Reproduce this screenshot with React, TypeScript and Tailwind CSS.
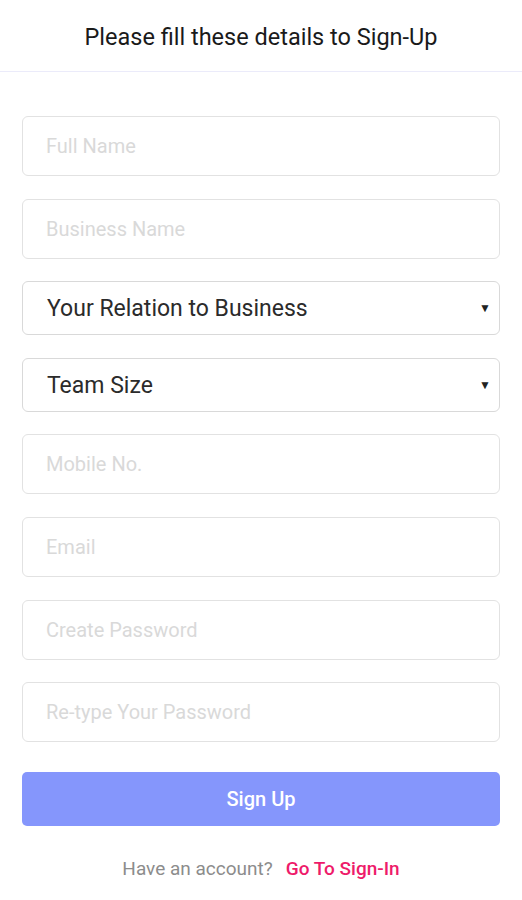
import React from "react";

const Field = ({ placeholder, type = "text" }: { placeholder: string; type?: string }) => (
  <input
    type={type}
    placeholder={placeholder}
    className="h-[60px] w-full rounded-[6px] border border-[#e2e2e2] bg-white px-[23px] text-[20px] text-[#333] outline-none placeholder:text-[#d9d9d9]"
  />
);

const SelectBox = ({ label }: { label: string }) => (
  <div className="flex h-[54px] w-full items-center justify-between rounded-[6px] border border-[#d9d9d9] bg-white pl-[24px] pr-[8px]">
    <span className="pt-[3px] text-[23px] text-[#2b2b2b]">{label}</span>
    <span className="text-[12px] text-[#222]">▼</span>
  </div>
);

export default function App() {
  return (
    <div className="min-h-[900px] w-full bg-white font-['Roboto',sans-serif]">
      <div className="flex h-[72px] items-center justify-center border-b border-[#ebebfa] pt-[5px]">
        <h1 className="text-[23.5px] font-normal text-[#1a1a1a]">Please fill these details to Sign-Up</h1>
      </div>
      <div className="flex flex-col gap-[22.6px] px-[22px] pt-[44px]">
        <Field placeholder="Full Name" />
        <Field placeholder="Business Name" />
        <SelectBox label="Your Relation to Business" />
        <SelectBox label="Team Size" />
        <Field placeholder="Mobile No." type="tel" />
        <Field placeholder="Email" type="email" />
        <Field placeholder="Create Password" type="password" />
        <Field placeholder="Re-type Your Password" type="password" />
      </div>
      <div className="px-[22px] pt-[30px]">
        <button className="h-[54px] w-full rounded-[5px] bg-[#8596fc] text-[20px] font-medium text-white">Sign Up</button>
      </div>
      <div className="flex justify-center pt-[29px] text-[19px]">
        <span className="text-[#8c8c8c]">Have an account?</span>
        <span className="ml-[13px] font-medium text-[#ee1b6a]">Go To Sign-In</span>
      </div>
    </div>
  );
}
